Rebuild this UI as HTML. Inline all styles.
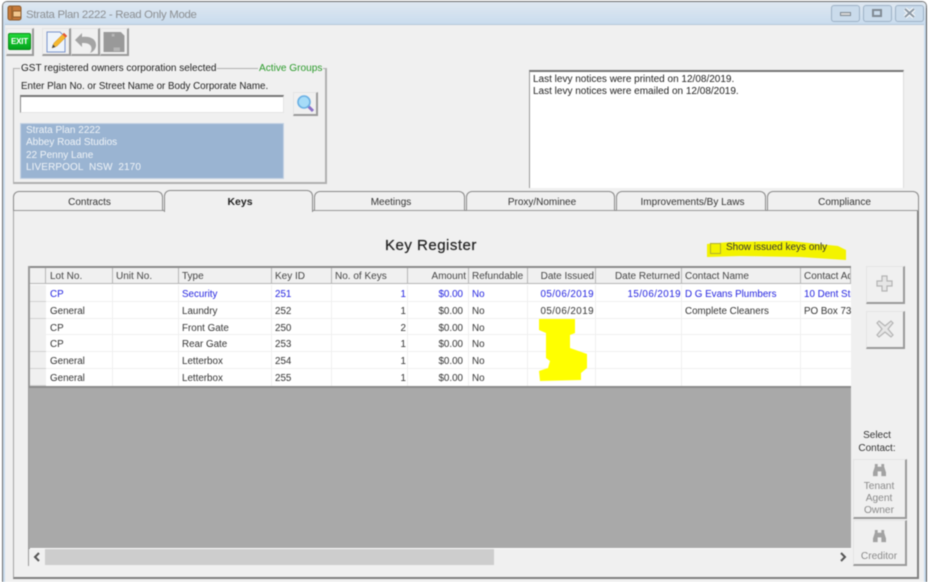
<!DOCTYPE html>
<html><head><meta charset="utf-8">
<style>
html,body{margin:0;padding:0;background:#fff}
#w{position:relative;width:930px;height:582px;overflow:hidden;background:#fff;font-family:"Liberation Sans",sans-serif;font-size:10px;color:#222;filter:blur(.45px)}
#w div{position:absolute;box-sizing:border-box;white-space:nowrap}
.t{line-height:14px;height:14px}
.btn{background:#f0f0f0;border-top:1px solid #e4e4e4;border-left:1px solid #e4e4e4;border-right:2px solid #9a9a9a;border-bottom:2px solid #9a9a9a}
.tab{height:20px;top:191px;background:#f0f0f0;border:1px solid #8a8a8a;border-bottom:1px solid #999;border-radius:6px 6px 0 0;text-align:center;line-height:21px;font-size:10px;padding-left:3px;color:#333}
.h{top:268px;height:16px;line-height:17px;background:#f0f0f0;border-right:1px solid #b5b5b5;border-bottom:1px solid #b5b5b5;padding:0 3px;font-size:10px;color:#444}
.c{line-height:19px;height:17px;font-size:9.8px;color:#333;padding:0 3px}
.b{color:#2222e0}
.r{text-align:right}
.d{letter-spacing:.45px}
.rh{left:30px;width:16px;background:#f0f0f0;border-bottom:1px solid #d2d2d2;height:17px}
</style></head><body>
<div id="w">
<!-- window frame -->
<div style="left:2px;top:1px;width:925px;height:581px;background:#f0f0f0;border:1px solid #6c6c6c;border-bottom:none;border-radius:5px 5px 0 0"></div>
<div style="left:3px;top:2px;width:923px;height:23px;background:linear-gradient(#dfe8f1,#c9dcee);border-bottom:1px solid #b4c6d8;border-radius:4px 4px 0 0"></div>
<div style="left:924px;top:24px;width:2px;height:558px;background:#c9dcee"></div>
<div style="left:3px;top:24px;width:2px;height:558px;background:#c9dcee"></div>
<div style="left:926px;top:8px;width:1px;height:574px;background:#555"></div>
<!-- app icon -->
<svg style="position:absolute;left:7px;top:5px" width="15" height="16" viewBox="0 0 15 16"><rect x="1" y="1" width="13" height="14" rx="2" fill="#c5793a" stroke="#8b5a2c"/><rect x="6" y="6" width="8" height="6" fill="#f2c78e" stroke="#8b5a2c"/><rect x="4" y="1" width="2" height="14" fill="#a0672f"/></svg>
<div class="t" style="left:26px;top:8px;font-size:11.4px;letter-spacing:-.3px;color:#8c8f92">Strata Plan 2222 - Read Only Mode</div>
<!-- caption buttons -->
<div style="left:831px;top:5px;width:29px;height:17px;border:1px solid #9db1c5;border-radius:3px;background:#cadbeb"></div>
<div style="left:840px;top:12px;width:11px;height:4px;background:#d9d9d9;border:1px solid #808a94"></div>
<div style="left:863px;top:5px;width:29px;height:17px;border:1px solid #9db1c5;border-radius:3px;background:#cadbeb"></div>
<div style="left:872px;top:9px;width:10px;height:8px;border:2px solid #808a94;background:#cadbeb"></div>
<div style="left:895px;top:5px;width:29px;height:17px;border:1px solid #9db1c5;border-radius:3px;background:#cadbeb"></div>
<svg style="position:absolute;left:903px;top:7px" width="13" height="12"><path d="M2 2L11 10M11 2L2 10" stroke="#fff" stroke-width="4"/><path d="M2 2L11 10M11 2L2 10" stroke="#8c98a4" stroke-width="2"/></svg>
<!-- toolbar -->
<div class="btn" style="left:6px;top:28px;width:28px;height:28px"></div>
<div style="left:8px;top:33px;width:23px;height:17px;background:linear-gradient(#22d838,#04a51d);border:1px solid #0a8a1a;border-radius:2px;color:#fff;font-size:8px;font-weight:bold;line-height:15px;text-align:center;letter-spacing:-.2px">EXIT</div>
<div class="btn" style="left:42px;top:28px;width:29px;height:28px"></div>
<svg style="position:absolute;left:45px;top:30px" width="24" height="24" viewBox="0 0 24 24"><path d="M2 2H15L20 7V22H2Z" fill="#eef4fb" stroke="#7a95cc"/><path d="M7 18L9 13L19 3L22 6L12 16Z" fill="#f5b82e" stroke="#c98d2a" stroke-width=".5"/><path d="M19 3L22 6L20.5 7.5L17.5 4.5Z" fill="#e4523a"/><path d="M7 18L8 14.5L10.5 17Z" fill="#444"/></svg>
<div class="btn" style="left:71px;top:28px;width:29px;height:28px"></div>
<svg style="position:absolute;left:73px;top:30px" width="25" height="24" viewBox="0 0 25 24"><path d="M2 10L9 3V7C17 6 23 9 23 15C23 19 20 22 17 23C19 20 19 17 17 15C15 13 12 13 9 13V17Z" fill="#a4a4a4"/></svg>
<div class="btn" style="left:100px;top:28px;width:29px;height:28px"></div>
<svg style="position:absolute;left:103px;top:32px" width="22" height="20" viewBox="0 0 23 22"><path d="M0 0H19L23 4V22H0Z" fill="#999"/><rect x="9" y="2" width="3" height="3" fill="#b8b8b8"/><rect x="11" y="17" width="7" height="4" fill="#b5b5b5"/></svg>
<!-- group box -->
<div style="left:13px;top:68px;width:314px;height:116px;border:1px solid #b0b0b0;border-bottom-width:2px;border-right-width:2px"></div>
<div class="t" style="left:20px;top:62px;background:#f0f0f0;padding:0 1px;font-size:10px;color:#222">GST registered owners corporation selected</div>
<div class="t" style="left:258px;top:62px;background:#f0f0f0;padding:0 1px;font-size:10.1px;color:#2a9a2a">Active Groups</div>
<div class="t" style="left:21px;top:80px;font-size:9.8px;color:#222">Enter Plan No. or Street Name or Body Corporate Name.</div>
<div style="left:20px;top:95px;width:264px;height:18px;background:#fff;border-top:2px solid #777;border-left:1px solid #888;border-right:1px solid #e4e4e4;border-bottom:1px solid #e4e4e4"></div>
<div class="btn" style="left:293px;top:92px;width:25px;height:24px"></div>
<svg style="position:absolute;left:296px;top:94px" width="19" height="19" viewBox="0 0 19 19"><path d="M12 12L17 17" stroke="#8a70c8" stroke-width="3"/><circle cx="8" cy="8" r="6" fill="#a6dcf8" stroke="#6ab0e4" stroke-width="1.6"/></svg>
<div style="left:20px;top:123px;width:264px;height:56px;background:#9ab4d2;border:1px solid #c5d3e3"></div>
<div class="t" style="left:26px;top:124px;color:#f0f4f8;font-size:10px">Strata Plan 2222</div>
<div class="t" style="left:26px;top:136px;color:#f0f4f8;font-size:10px">Abbey Road Studios</div>
<div class="t" style="left:26px;top:149px;color:#f0f4f8;font-size:10px">22 Penny Lane</div>
<div class="t" style="left:26px;top:161px;color:#f0f4f8;font-size:10px;letter-spacing:.1px;white-space:pre">LIVERPOOL  NSW  2170</div>
<!-- notes -->
<div style="left:529px;top:70px;width:375px;height:118px;background:#fff;border-top:2px solid #777;border-left:1px solid #999;border-right:1px solid #ddd"></div>
<div class="t" style="left:533px;top:73px;font-size:10px">Last levy notices were printed on 12/08/2019.</div>
<div class="t" style="left:533px;top:85px;font-size:10px">Last levy notices were emailed on 12/08/2019.</div>
<!-- tab panel -->
<div style="left:13px;top:210px;width:906px;height:369px;background:#f0f0f0;border:1px solid #8a8a8a;border-left:1px solid #a5a5a5;border-right:2px solid #808080;border-bottom:2px solid #808080"></div>
<div class="tab" style="left:13px;width:150px">Contracts</div>
<div class="tab" style="left:314px;width:151px">Meetings</div>
<div class="tab" style="left:466px;width:149px">Proxy/Nominee</div>
<div class="tab" style="left:616px;width:150px">Improvements/By Laws</div>
<div class="tab" style="left:767px;width:152px">Compliance</div>
<div class="tab" style="left:164px;top:190px;width:149px;height:22px;border-bottom:none;font-weight:bold;line-height:23px;color:#222;font-size:10.5px">Keys</div>
<div style="left:165px;top:210px;width:147px;height:2px;background:#f0f0f0"></div>
<div class="t" style="left:385px;top:238px;height:16px;line-height:16px;font-size:15px;color:#222;letter-spacing:.5px;-webkit-text-stroke:.2px #222">Key Register</div>
<!-- highlight 1 -->
<svg style="position:absolute;left:0;top:0" width="930" height="582"><path d="M707 244L730 242L790 241L838 246L846 250V260L800 257L740 256L707 257Z" fill="#f3f300"/></svg>
<div style="left:710px;top:243px;width:11px;height:11px;border:1px solid #b0b030"></div>
<div class="t" style="left:726px;top:241px;font-size:10px;color:#333">Show issued keys only</div>
<!-- grid -->
<div style="left:28px;top:266px;width:823px;height:300px;background:#fff;overflow:hidden"></div>
<div style="left:28px;top:266px;width:823px;height:2px;background:#8c8c8c"></div>
<div style="left:28px;top:266px;width:1.5px;height:300px;background:#999"></div>
<div class="h" style="left:30px;width:16px"></div>
<div class="h" style="left:46px;width:67px;padding-left:4px">Lot No.</div>
<div class="h" style="left:113px;width:66px">Unit No.</div>
<div class="h" style="left:179px;width:93px">Type</div>
<div class="h" style="left:272px;width:60px">Key ID</div>
<div class="h" style="left:332px;width:76px">No. of Keys</div>
<div class="h r" style="left:408px;width:61px;padding-right:2px">Amount</div>
<div class="h" style="left:469px;width:59px">Refundable</div>
<div class="h r" style="left:528px;width:68px;padding-right:1px">Date Issued</div>
<div class="h r" style="left:596px;width:86px;padding-right:1px">Date Returned</div>
<div class="h" style="left:682px;width:119px">Contact Name</div>
<div class="h" style="left:801px;width:50px;overflow:hidden">Contact Address</div>
<!-- row header cells & lines -->
<div class="rh" style="top:285px"></div>
<div class="rh" style="top:302px"></div>
<div class="rh" style="top:319px"></div>
<div class="rh" style="top:335px"></div>
<div class="rh" style="top:352px"></div>
<div class="rh" style="top:369px"></div>
<div style="left:46px;top:301px;width:805px;height:1px;background:#f0f0f0"></div>
<div style="left:46px;top:318px;width:805px;height:1px;background:#f0f0f0"></div>
<div style="left:46px;top:334px;width:805px;height:1px;background:#f0f0f0"></div>
<div style="left:46px;top:351px;width:805px;height:1px;background:#f0f0f0"></div>
<div style="left:46px;top:368px;width:805px;height:1px;background:#f0f0f0"></div>
<div style="left:112px;top:285px;width:1px;height:101px;background:#f0f0f0"></div>
<div style="left:178px;top:285px;width:1px;height:101px;background:#f0f0f0"></div>
<div style="left:271px;top:285px;width:1px;height:101px;background:#f0f0f0"></div>
<div style="left:331px;top:285px;width:1px;height:101px;background:#f0f0f0"></div>
<div style="left:407px;top:285px;width:1px;height:101px;background:#f0f0f0"></div>
<div style="left:468px;top:285px;width:1px;height:101px;background:#f0f0f0"></div>
<div style="left:527px;top:285px;width:1px;height:101px;background:#f0f0f0"></div>
<div style="left:595px;top:285px;width:1px;height:101px;background:#f0f0f0"></div>
<div style="left:681px;top:285px;width:1px;height:101px;background:#f0f0f0"></div>
<div style="left:800px;top:285px;width:1px;height:101px;background:#f0f0f0"></div>
<!-- row 1 -->
<div class="c b" style="left:47px;top:285px">CP</div>
<div class="c b" style="left:179px;top:285px">Security</div>
<div class="c b" style="left:272px;top:285px">251</div>
<div class="c b r" style="left:332px;top:285px;width:77px">1</div>
<div class="c b r" style="left:408px;top:285px;width:58px">$0.00</div>
<div class="c b" style="left:469px;top:285px">No</div>
<div class="c b r d" style="left:527px;top:285px;width:68px;padding-right:1px">05/06/2019</div>
<div class="c b r d" style="left:596px;top:285px;width:86px;padding-right:1px">15/06/2019</div>
<div class="c b" style="left:682px;top:285px">D G Evans Plumbers</div>
<div class="c b" style="left:801px;top:285px;width:50px;overflow:hidden">10 Dent Street</div>
<!-- row 2 -->
<div class="c" style="left:47px;top:302px">General</div>
<div class="c" style="left:179px;top:302px">Laundry</div>
<div class="c" style="left:272px;top:302px">252</div>
<div class="c r" style="left:332px;top:302px;width:77px">1</div>
<div class="c r" style="left:408px;top:302px;width:58px">$0.00</div>
<div class="c" style="left:469px;top:302px">No</div>
<div class="c r d" style="left:527px;top:302px;width:68px;padding-right:1px">05/06/2019</div>
<div class="c" style="left:682px;top:302px">Complete Cleaners</div>
<div class="c" style="left:801px;top:302px;width:50px;overflow:hidden">PO Box 7377</div>
<!-- row 3 -->
<div class="c" style="left:47px;top:319px">CP</div>
<div class="c" style="left:179px;top:319px">Front Gate</div>
<div class="c" style="left:272px;top:319px">250</div>
<div class="c r" style="left:332px;top:319px;width:77px">2</div>
<div class="c r" style="left:408px;top:319px;width:58px">$0.00</div>
<div class="c" style="left:469px;top:319px">No</div>
<!-- row 4 -->
<div class="c" style="left:47px;top:335px">CP</div>
<div class="c" style="left:179px;top:335px">Rear Gate</div>
<div class="c" style="left:272px;top:335px">253</div>
<div class="c r" style="left:332px;top:335px;width:77px">1</div>
<div class="c r" style="left:408px;top:335px;width:58px">$0.00</div>
<div class="c" style="left:469px;top:335px">No</div>
<!-- row 5 -->
<div class="c" style="left:47px;top:352px">General</div>
<div class="c" style="left:179px;top:352px">Letterbox</div>
<div class="c" style="left:272px;top:352px">254</div>
<div class="c r" style="left:332px;top:352px;width:77px">1</div>
<div class="c r" style="left:408px;top:352px;width:58px">$0.00</div>
<div class="c" style="left:469px;top:352px">No</div>
<!-- row 6 -->
<div class="c" style="left:47px;top:369px">General</div>
<div class="c" style="left:179px;top:369px">Letterbox</div>
<div class="c" style="left:272px;top:369px">255</div>
<div class="c r" style="left:332px;top:369px;width:77px">1</div>
<div class="c r" style="left:408px;top:369px;width:58px">$0.00</div>
<div class="c" style="left:469px;top:369px">No</div>
<!-- highlight 2 -->
<svg style="position:absolute;left:0;top:0" width="930" height="582"><path d="M539 319L575 319V333L570 335V348L587 354V368L581 373V380L540 381L539 371L548 368L550 361L546 358V333L539 330Z" fill="#ffff00"/></svg>
<!-- gray area -->
<div style="left:29px;top:386px;width:822px;height:2px;background:#8c8c8c"></div>
<div style="left:29px;top:388px;width:822px;height:160px;background:#a9a9a9"></div>
<!-- scrollbar -->
<div style="left:29px;top:549px;width:822px;height:17px;background:#f0f0f0"></div>
<div style="left:45px;top:549px;width:449px;height:16px;background:#cdcdcd"></div>
<svg style="position:absolute;left:33px;top:552px" width="10" height="10"><path d="M6 1L2 5L6 9" fill="none" stroke="#555" stroke-width="2"/></svg>
<svg style="position:absolute;left:838px;top:552px" width="10" height="10"><path d="M3 1L7 5L3 9" fill="none" stroke="#555" stroke-width="2"/></svg>
<!-- right buttons -->
<div class="btn" style="left:866px;top:266px;width:39px;height:38px"></div>
<svg style="position:absolute;left:876px;top:275px" width="18" height="18"><path d="M6 1H11V6H16V11H11V16H6V11H1V6H6Z" fill="#e6e6e6" stroke="#b4b4b4" stroke-width="1.2"/></svg>
<div class="btn" style="left:866px;top:311px;width:39px;height:38px"></div>
<svg style="position:absolute;left:876px;top:320px" width="18" height="18"><path d="M3 1L9 6L15 1L17 3L12 9L17 15L15 17L9 12L3 17L1 15L6 9L1 3Z" fill="#e6e6e6" stroke="#b4b4b4" stroke-width="1.2"/></svg>
<div class="t" style="left:853px;top:429px;width:48px;text-align:center;font-size:10px;color:#333">Select</div>
<div class="t" style="left:853px;top:442px;width:48px;text-align:center;font-size:10px;color:#333">Contact:</div>
<div class="btn" style="left:853px;top:459px;width:54px;height:60px"></div>
<svg style="position:absolute;left:872px;top:464px" width="15" height="13" viewBox="0 0 16 14"><path d="M3 0H6V3H10V0H13V3L15 9V13H10V8H6V13H1V9L3 3Z" fill="#a2a2a2"/></svg>
<div class="t" style="left:853px;top:480px;width:52px;text-align:center;font-size:10.2px;color:#8a8a8a">Tenant</div>
<div class="t" style="left:853px;top:492px;width:52px;text-align:center;font-size:10.2px;color:#8a8a8a">Agent</div>
<div class="t" style="left:853px;top:504px;width:52px;text-align:center;font-size:10.2px;color:#8a8a8a">Owner</div>
<div class="btn" style="left:853px;top:520px;width:54px;height:46px"></div>
<svg style="position:absolute;left:872px;top:530px" width="15" height="13" viewBox="0 0 16 14"><path d="M3 0H6V3H10V0H13V3L15 9V13H10V8H6V13H1V9L3 3Z" fill="#a2a2a2"/></svg>
<div class="t" style="left:853px;top:550px;width:52px;text-align:center;font-size:10.2px;color:#8a8a8a">Creditor</div>
</div>
</body></html>
